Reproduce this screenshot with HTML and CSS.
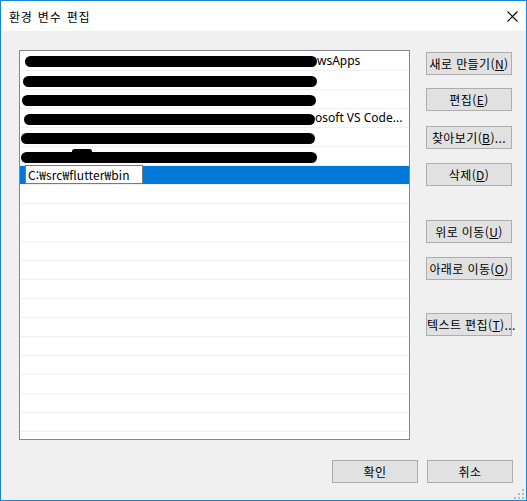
FILE: index.html
```html
<!DOCTYPE html>
<html lang="ko">
<head>
<meta charset="utf-8">
<title>환경 변수 편집</title>
<link rel="stylesheet" href="styles.css">
</head>
<body>
<div class="window">
  <div class="titlebar">
    <span class="title">환경 변수 편집</span>
    <svg class="close" width="11" height="11" viewBox="0 0 11 11"><path d="M0.5 0.5L10.5 10.5M10.5 0.5L0.5 10.5" stroke="#000" stroke-width="1.1" fill="none"/></svg>
  </div>
  <div class="content">
    <div class="main">
      <div class="list">
        <div class="row"><span class="blob b1"></span><span class="rest">wsApps</span></div>
        <div class="row"><span class="blob b2"></span></div>
        <div class="row"><span class="blob b3"></span></div>
        <div class="row"><span class="blob b4"></span><span class="rest">osoft VS Code...</span></div>
        <div class="row"><span class="blob b5"></span></div>
        <div class="row"><span class="blob b6"><span class="bump"></span></span></div>
        <div class="row selected"><span class="edit">C:₩src₩flutter₩bin</span></div>
        <div class="row"></div>
        <div class="row"></div>
        <div class="row"></div>
        <div class="row"></div>
        <div class="row"></div>
        <div class="row"></div>
        <div class="row"></div>
        <div class="row"></div>
        <div class="row"></div>
        <div class="row"></div>
        <div class="row"></div>
        <div class="row"></div>
        <div class="row"></div>
        <div class="row"></div>
      </div>
      <div class="side">
        <button class="btn">새로 만들기(<u>N</u>)</button>
        <button class="btn s-edit">편집(<u>E</u>)</button>
        <button class="btn s-browse">찾아보기(<u>B</u>)...</button>
        <button class="btn s-del">삭제(<u>D</u>)</button>
        <button class="btn s-up">위로 이동(<u>U</u>)</button>
        <button class="btn s-down">아래로 이동(<u>O</u>)</button>
        <button class="btn s-text">텍스트 편집(<u>T</u>)...</button>
      </div>
    </div>
    <div class="footer">
      <button class="btn">확인</button>
      <button class="btn">취소</button>
    </div>
  </div>
  <svg class="grip" width="10" height="10" viewBox="0 0 10 10">
    <rect x="8" y="0" width="2" height="2" fill="#b8b8b8"/>
    <rect x="4" y="4" width="2" height="2" fill="#b8b8b8"/>
    <rect x="8" y="4" width="2" height="2" fill="#b8b8b8"/>
    <rect x="0" y="8" width="2" height="2" fill="#b8b8b8"/>
    <rect x="4" y="8" width="2" height="2" fill="#b8b8b8"/>
    <rect x="8" y="8" width="2" height="2" fill="#b8b8b8"/>
  </svg>
</div>
</body>
</html>
```
FILE: styles.css
```css
html, body {
  margin: 0;
  padding: 0;
  background: #ffffff;
}
body {
  font-family: "Noto Sans CJK KR", "Noto Sans", sans-serif;
  font-size: 12px;
  color: #000;
}
.window {
  width: 527px;
  height: 501px;
  box-sizing: border-box;
  border: 1px solid #1883d7;
  background: #f0f0f0;
  position: relative;
  display: flex;
  flex-direction: column;
}
.titlebar {
  height: 30px;
  flex: none;
  background: #fff;
  display: flex;
  align-items: center;
  justify-content: space-between;
  padding: 0 8px 0 8px;
}
.title {
  font-size: 12px;
  line-height: 16px;
  margin-top: 1px;
  letter-spacing: 0.8px;
  word-spacing: 1px;
}
.close {
  display: block;
}
.content {
  flex: 1;
  padding: 19px 13px 0 18px;
}
.main {
  display: flex;
  gap: 16px;
}
.list {
  width: 391px;
  height: 390px;
  box-sizing: border-box;
  border: 1px solid #828790;
  background: #fff;
  padding-top: 1px;
  overflow: hidden;
}
.row {
  height: 18px;
  border-bottom: 1px solid #f0f0f0;
  display: flex;
  align-items: center;
  font-family: "Noto Sans", "Noto Sans CJK KR", sans-serif;
  font-size: 12px;
  line-height: 16px;
  white-space: nowrap;
}
.row.selected {
  background: #0078d7;
  border-bottom-color: #f0f0f0;
}
.blob {
  display: block;
  height: 11px;
  background: #000;
  border-radius: 6px;
  position: relative;
  flex: none;
}
.b1 { margin-left: 5px; width: 292px; margin-top: 1px; }
.b2 { margin-left: 3px; width: 294px; margin-top: 3px; }
.b3 { margin-left: 2px; width: 294px; margin-top: 3px; }
.b4 { margin-left: 4px; width: 291px; margin-top: 3px; }
.b5 { margin-left: 1px; width: 294px; margin-top: 3px; }
.b6 { margin-left: 1px; width: 296px; margin-top: 3px; }
.bump {
  position: absolute;
  left: 51px;
  top: -3px;
  width: 20px;
  height: 5px;
  background: #000;
  border-radius: 3px;
}
.rest {
  margin-left: 0;
  color: #000;
}
.edit {
  margin-left: 5px;
  margin-top: -1px;
  height: 17px;
  width: 114px;
  background: #fff;
  border: 1px solid #7a7a7a;
  padding-left: 2px;
  line-height: 17px;
  font-family: "Noto Sans CJK KR", sans-serif;
  font-size: 12px;
  letter-spacing: 0.1px;
}
.side {
  width: 86px;
  display: flex;
  flex-direction: column;
  padding-top: 2px;
}
.btn {
  width: 86px;
  height: 23px;
  box-sizing: border-box;
  border: 1px solid #adadad;
  background: #e1e1e1;
  font-family: "Noto Sans CJK KR", sans-serif;
  font-size: 12px;
  line-height: 20px;
  color: #000;
  padding: 0;
  margin: 0;
  text-align: center;
  white-space: nowrap;
  letter-spacing: 0.4px;
}
.btn u {
  text-decoration: underline;
  text-underline-offset: 1px;
}
.s-edit { margin-top: 13px; }
.s-browse { margin-top: 15px; }
.s-del { margin-top: 14px; }
.s-up { margin-top: 34px; }
.s-down { margin-top: 14px; }
.s-text { margin-top: 33px; }
.footer {
  display: flex;
  justify-content: flex-end;
  gap: 9px;
  margin-top: 20px;
}
.grip {
  position: absolute;
  right: 2px;
  bottom: 1px;
}
```
